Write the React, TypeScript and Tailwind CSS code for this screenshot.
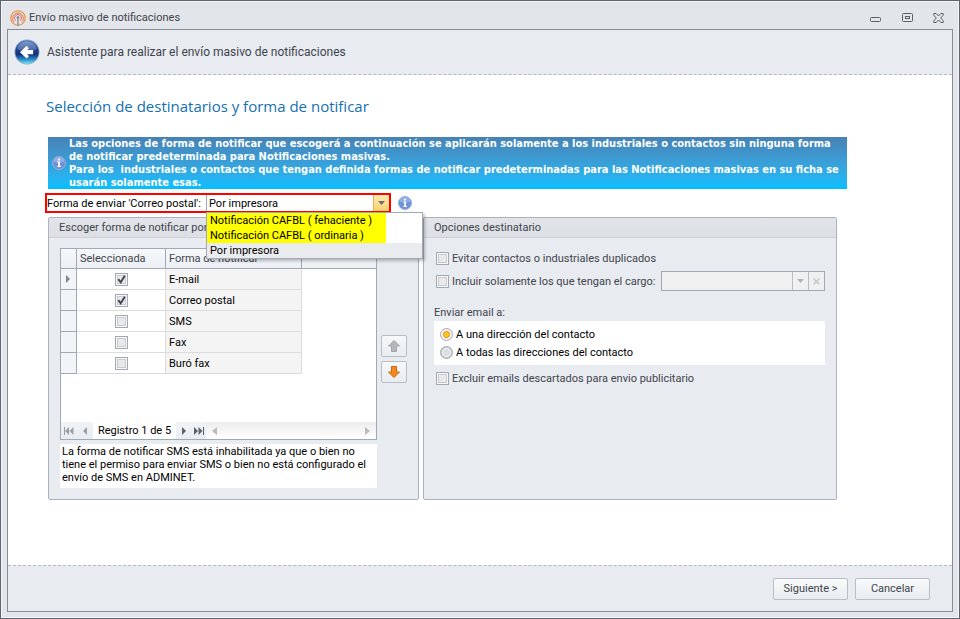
import type { ReactNode } from "react";

const methods = [
  { name: "E-mail", checked: true },
  { name: "Correo postal", checked: true },
  { name: "SMS", checked: false },
  { name: "Fax", checked: false },
  { name: "Buró fax", checked: false },
];

function AppIcon() {
  return (
    <svg width="16" height="16" viewBox="0 0 16 16" fill="none" aria-hidden>
      <circle cx="8" cy="8" r="7.2" stroke="#f0954a" strokeWidth="1.3" />
      <path d="M4.2 12.2a5.4 5.4 0 1 1 7.6 0" stroke="#e8744c" />
      <path d="M5.6 10.6a3.5 3.5 0 1 1 4.8 0" stroke="#dd6a5a" />
      <path d="M8 8v8" stroke="#9a9a9a" strokeWidth="1.6" />
      <circle cx="8" cy="7.6" r="1.5" fill="#8d8d8d" />
    </svg>
  );
}

function BackIcon() {
  return (
    <svg width="26" height="26" viewBox="0 0 26 26" aria-hidden>
      <defs>
        <linearGradient id="back" x1="0" y1="0" x2="0" y2="1">
          <stop offset="0" stopColor="#5c86c6" />
          <stop offset="0.4" stopColor="#20408e" />
          <stop offset="0.6" stopColor="#14307c" />
          <stop offset="0.82" stopColor="#2b8fc8" />
          <stop offset="1" stopColor="#6fe6f6" />
        </linearGradient>
      </defs>
      <circle cx="13" cy="13" r="12.5" fill="#8fa3c4" />
      <circle cx="13" cy="13" r="11.7" fill="url(#back)" />
      <path d="M3 10a10.4 10.4 0 0 1 20 0c-5 2.6-14 3.2-20 0Z" fill="#fff" opacity="0.22" />
      <path d="M6 13.2 12.6 6.8l2.4 2.4-1.9 1.9h6v4.2h-6l1.9 1.9-2.4 2.4Z" fill="#fff" />
    </svg>
  );
}

function InfoIcon() {
  return (
    <svg className="shrink-0" width="14" height="14" viewBox="0 0 14 14" aria-hidden>
      <circle cx="7" cy="7" r="6.5" fill="#6f93d8" stroke="#94addf" />
      <path d="M1.6 5.5a5.5 5.5 0 0 1 10.8 0c-3 1.5-7.8 1.5-10.8 0Z" fill="#fff" opacity="0.25" />
      <circle cx="7" cy="3.6" r="1.1" fill="#fff" />
      <path d="M5.4 5.5H8v4.6h.9v1H5.3v-1h.9V6.5h-.8Z" fill="#fff" />
    </svg>
  );
}

function WindowButton({ label, children }: { label: string; children: ReactNode }) {
  return (
    <button type="button" aria-label={label} className="flex h-4 w-4 items-center justify-center">
      <svg width="12" height="12" viewBox="0 0 12 12" fill="none" stroke="#5a606a" aria-hidden>
        {children}
      </svg>
    </button>
  );
}

function CheckBox({ id, label, checked = false }: { id: string; label?: string; checked?: boolean }) {
  return (
    <span className="relative block h-[13px] w-[13px] shrink-0">
      <input
        id={id}
        type="checkbox"
        aria-label={label}
        defaultChecked={checked}
        className="block h-[13px] w-[13px] appearance-none border border-[#a2a9b5] bg-[#e9e9ea] shadow-[inset_0_0_0_1px_#f6f7f9,inset_0_0_0_2px_#c9cbd0]"
      />
      {checked && (
        <svg className="pointer-events-none absolute inset-0" width="13" height="13" viewBox="0 0 13 13" fill="none" aria-hidden>
          <path d="M3.3 6.2 5.7 9.3 9.8 2.8" stroke="#3f444d" strokeWidth="1.9" />
        </svg>
      )}
    </span>
  );
}

function CheckRow({ id, children }: { id: string; children: ReactNode }) {
  return (
    <div className="flex items-center gap-[3px] pl-0.5">
      <CheckBox id={id} />
      <label htmlFor={id} className="whitespace-nowrap">
        {children}
      </label>
    </div>
  );
}

function RadioRow({ id, checked, children }: { id: string; checked?: boolean; children: ReactNode }) {
  return (
    <div className="flex h-[18px] items-center gap-[3px] pl-1.5">
      <input
        id={id}
        type="radio"
        name="direccion"
        defaultChecked={checked}
        className="h-[13px] w-[13px] shrink-0 appearance-none rounded-full border border-[#a2a9b5] bg-[radial-gradient(circle,#dcdee1_0_3px,#f3f4f5_4px,#c9ccd1_5px)] checked:bg-[radial-gradient(circle,#ffc629_0_2px,#e2951c_3px,#fdf6e6_4px,#f2f3f5_5px)]"
      />
      <label htmlFor={id}>{children}</label>
    </div>
  );
}

function Group({ title, className, children }: { title: string; className: string; children: ReactNode }) {
  return (
    <section className={`rounded-xs border border-[#acb2bc] bg-[#e8ebf0] ${className}`}>
      <h2 className="h-5 border-b border-[#ced2d7] bg-linear-to-b from-[#e1e5e9] to-[#dce0e4] px-2.5 leading-[19px]">
        {title}
      </h2>
      {children}
    </section>
  );
}

function NavButton({ label, d, muted }: { label: string; d: string; muted?: boolean }) {
  return (
    <button
      type="button"
      aria-label={label}
      className={`flex h-full items-center justify-center ${muted ? "w-4 text-[#9a9fa6]" : "w-[15px] text-[#5a6069]"}`}
    >
      <svg width="12" height="8" viewBox="0 0 12 8" fill="currentColor" aria-hidden>
        <path d={d} />
      </svg>
    </button>
  );
}

function MoveButton({ label, color, edge, d }: { label: string; color: string; edge: string; d: string }) {
  return (
    <button
      type="button"
      aria-label={label}
      className="flex h-[22px] w-[26px] items-center justify-center rounded-xs border border-[#b9bec6] bg-linear-to-b from-[#f6f8fa] to-[#e9ecf0]"
    >
      <svg width="14" height="14" viewBox="0 0 14 14" fill={color} stroke={edge} aria-hidden>
        <path d={d} />
      </svg>
    </button>
  );
}

function MethodsGrid() {
  return (
    <div className="flex h-[192px] flex-col border border-[#a0a9b6] bg-white">
      <table className="w-full table-fixed border-separate border-spacing-0 text-left text-black">
        <colgroup>
          <col className="w-4" />
          <col className="w-[89px]" />
          <col className="w-[136px]" />
          <col />
        </colgroup>
        <thead>
          <tr className="h-5 bg-linear-to-b from-[#f6f8fb] to-[#ebeef3] text-[#3f444d]">
            <th className="border-r border-b border-[#a0a9b6] p-0" />
            <th className="border-r border-b border-[#a0a9b6] px-[3px] py-0 font-normal">Seleccionada</th>
            <th className="border-r border-b border-[#a0a9b6] px-[3px] py-0 font-normal">Forma de notificar</th>
            <th className="border-b border-[#a0a9b6] p-0" />
          </tr>
        </thead>
        <tbody>
          {methods.map((m, i) => (
            <tr key={m.name} className="h-[21px]">
              <td className="border-r border-b border-[#a0a9b6] bg-[#f2f5f8] p-0">
                {i === 0 && (
                  <svg className="mx-auto" width="5" height="8" viewBox="0 0 5 8" fill="#7d838c" aria-hidden>
                    <path d="M0 0 4 4 0 8Z" />
                  </svg>
                )}
              </td>
              <td className="border-r border-b border-[#dcdcdc] p-0">
                <div className="flex justify-center">
                  <CheckBox id={`m${i}`} label={m.name} checked={m.checked} />
                </div>
              </td>
              <td className="border-r border-b border-[#dcdcdc] bg-[#f4f4f4] px-[3px] py-0">{m.name}</td>
              <td className="p-0" />
            </tr>
          ))}
        </tbody>
      </table>
      <div className="mt-auto flex h-[17px] items-center bg-linear-to-b from-[#f0f3f6] to-[#e9edf1]">
        <NavButton label="Primero" muted d="M1 0h1v8H1ZM6 0v8L2 4ZM10.5 0v8l-4-4Z" />
        <NavButton label="Anterior" muted d="M8 0v8L4 4Z" />
        <span className="h-full w-[83px] flex-none bg-white text-center leading-[17px] text-black">Registro 1 de 5</span>
        <NavButton label="Siguiente registro" d="M4 0v8l4-4Z" />
        <NavButton label="Último" d="M1 0v8l4-4ZM5.5 0v8l4-4ZM10 0h1v8h-1Z" />
        <div className="flex h-full flex-1 items-center justify-between bg-linear-to-b from-[#ececec] to-white px-1.5">
          <svg width="5" height="8" viewBox="0 0 5 8" fill="#b9bbbe" aria-hidden>
            <path d="M5 0v8L0 4Z" />
          </svg>
          <svg width="5" height="8" viewBox="0 0 5 8" fill="#b9bbbe" aria-hidden>
            <path d="M0 0v8l5-4Z" />
          </svg>
        </div>
      </div>
    </div>
  );
}

function PostalCombo() {
  return (
    <div className="flex items-center gap-[7px]">
      <div className="-ml-[3px] flex h-5 w-[346px] items-center border-2 border-[#ff0000] bg-white text-black">
        <label htmlFor="postal" className="w-[159px] shrink-0 whitespace-nowrap">
          Forma de enviar 'Correo postal':
        </label>
        <div className="relative h-full flex-1 border-l border-[#a2a9b5]">
          <select id="postal" defaultValue="Por impresora" className="block h-full w-full appearance-none pl-0.5">
            <option>Notificación CAFBL ( fehaciente )</option>
            <option>Notificación CAFBL ( ordinaria )</option>
            <option>Por impresora</option>
          </select>
          <span className="pointer-events-none absolute inset-y-0 right-0 flex w-4 items-center justify-center border-l border-[#e0b654] bg-linear-to-b from-[#fdeab0] to-[#fbd36d]">
            <svg width="7" height="4" viewBox="0 0 7 4" fill="#6b6f76" aria-hidden>
              <path d="M0 0h7L3.5 4Z" />
            </svg>
          </span>
          <ul className="absolute top-[17px] -left-px z-10 w-[217px] border border-[#a2a9b5] bg-white shadow-[2px_2px_3px_rgba(0,0,0,0.25)]">
            <li className="mr-9 h-[15px] bg-[#ffff00] px-[3px] leading-[15px]">Notificación CAFBL ( fehaciente )</li>
            <li className="mr-9 h-[15px] bg-[#ffff00] px-[3px] leading-[15px]">Notificación CAFBL ( ordinaria )</li>
            <li className="h-[15px] bg-[#e9ebee] px-[3px] leading-[15px]">Por impresora</li>
          </ul>
        </div>
      </div>
      <InfoIcon />
    </div>
  );
}

function FooterButton({ children }: { children: ReactNode }) {
  return (
    <button
      type="button"
      className="h-[22px] w-[75px] rounded-xs border border-[#b9bec6] bg-linear-to-b from-[#f8fafb] to-[#e9ecf0]"
    >
      {children}
    </button>
  );
}

export default function App() {
  return (
    <div className="flex min-h-screen flex-col border border-[#5f6570] bg-[#e2e5e9] font-['Roboto',sans-serif] text-[11px] leading-[13px] text-[#3f444d]">
      <div className="flex flex-1 flex-col border border-[#f6f7f9] px-[5px] pb-[5px]">
        <header className="flex h-[27px] items-center gap-[3px] pt-1 pr-1.5 pl-[3px]">
          <AppIcon />
          <h1>Envío masivo de notificaciones</h1>
          <div className="ml-auto flex gap-4">
            <WindowButton label="Minimizar">
              <rect x="1.5" y="5.5" width="10" height="4" rx="1" />
            </WindowButton>
            <WindowButton label="Maximizar">
              <rect x="1.5" y="1.5" width="10" height="8" rx="1" />
              <rect x="4.5" y="4.5" width="4" height="2" />
            </WindowButton>
            <WindowButton label="Cerrar">
              <path d="M.8 1.5h2.4L5.5 4l2.3-2.5h2.4v1.7L7.7 6l2.5 2.8v1.7H7.8L5.5 8l-2.3 2.5H.8V8.8L3.3 6 .8 3.2Z" />
            </WindowButton>
          </div>
        </header>

        <div className="flex flex-1 flex-col border border-[#868b94] bg-white">
          <div className="flex h-[45px] items-center gap-[7px] border-b border-dashed border-[#b3b9c6] bg-[#e8ebf0] pl-1.5">
            <button type="button" aria-label="Atrás">
              <BackIcon />
            </button>
            <p className="text-[12px] leading-4">Asistente para realizar el envío masivo de notificaciones</p>
          </div>

          <main className="flex-1 pt-[19px] pr-[105px] pl-10">
            <h2 className="-ml-0.5 font-['Open_Sans',sans-serif] text-[15px] leading-6 text-[#1470b0]">
              Selección de destinatarios y forma de notificar
            </h2>

            <div className="mt-[19px] flex items-center gap-[3px] bg-linear-to-b from-[#4682b4] to-[#00bfff] pl-1 font-['DejaVu_Sans_Condensed',sans-serif] font-bold text-white">
              <InfoIcon />
              <p className="whitespace-pre-wrap">
                Las opciones de forma de notificar que escogerá a continuación se aplicarán solamente a los industriales o contactos sin ninguna forma
                <br />
                de notificar predeterminada para Notificaciones masivas.
                <br />
                {"Para los  industriales o contactos que tengan definida formas de notificar predeterminadas para las Notificaciones masivas en su ficha se"}
                <br />
                usarán solamente esas.
              </p>
            </div>

            <div className="mt-1">
              <PostalCombo />
            </div>

            <div className="mt-1 mr-2.5 flex gap-1">
              <Group title="Escoger forma de notificar por" className="h-[283px] w-[371px] shrink-0">
                <div className="flex gap-1 pt-2.5 pl-[11px]">
                  <div className="w-[317px]">
                    <MethodsGrid />
                    <p className="mt-1 h-11 bg-white px-0.5 pt-px text-black">
                      La forma de notificar SMS está inhabilitada ya que o bien no
                      <br />
                      tiene el permiso para enviar SMS o bien no está configurado el
                      <br />
                      envío de SMS en ADMINET.
                    </p>
                  </div>
                  <div className="flex flex-col gap-1 pt-[87px]">
                    <MoveButton label="Subir" color="#b4b6b9" edge="#a2a4a8" d="M7 1.5 12.5 7h-3v5.5h-5V7h-3Z" />
                    <MoveButton label="Bajar" color="#f58a1c" edge="#c8681a" d="M7 12.5 1.5 7h3V1.5h5V7h3Z" />
                  </div>
                </div>
              </Group>

              <Group title="Opciones destinatario" className="flex-1">
                <div className="pt-3.5 pr-[11px] pl-2.5">
                  <CheckRow id="evitar">Evitar contactos o industriales duplicados</CheckRow>
                  <div className="mt-1.5 flex h-5 items-center">
                    <CheckRow id="incluir">Incluir solamente los que tengan el cargo:</CheckRow>
                    <div className="ml-auto flex h-5 w-[164px] border border-[#a2a9b5] bg-[#f0f0f0]">
                      <input aria-label="Cargo" disabled className="min-w-0 flex-1 px-1" />
                      <button type="button" aria-label="Desplegar" className="flex w-4 items-center justify-center border-l border-[#b9bdc4]">
                        <svg width="7" height="4" viewBox="0 0 7 4" fill="#b0b3b8" aria-hidden>
                          <path d="M0 0h7L3.5 4Z" />
                        </svg>
                      </button>
                      <button type="button" aria-label="Borrar" className="flex w-4 items-center justify-center border-l border-[#b9bdc4]">
                        <svg width="7" height="7" viewBox="0 0 7 7" stroke="#c9cbcf" strokeWidth="1.8" aria-hidden>
                          <path d="m.7.7 5.6 5.6M6.3.7.7 6.3" />
                        </svg>
                      </button>
                    </div>
                  </div>
                  <fieldset className="mt-[15px]">
                    <legend>Enviar email a:</legend>
                    <div className="mt-0.5 bg-white py-1 text-black">
                      <RadioRow id="una" checked>
                        A una dirección del contacto
                      </RadioRow>
                      <RadioRow id="todas">A todas las direcciones del contacto</RadioRow>
                    </div>
                  </fieldset>
                  <div className="mt-[7px]">
                    <CheckRow id="excluir">Excluir emails descartados para envio publicitario</CheckRow>
                  </div>
                </div>
              </Group>
            </div>
          </main>

          <footer className="flex h-[46px] items-center justify-end gap-[7px] border-t border-dashed border-[#b3b9c6] bg-[#e8ebf0] pr-[22px]">
            <FooterButton>Siguiente &gt;</FooterButton>
            <FooterButton>Cancelar</FooterButton>
          </footer>
        </div>
      </div>
    </div>
  );
}
